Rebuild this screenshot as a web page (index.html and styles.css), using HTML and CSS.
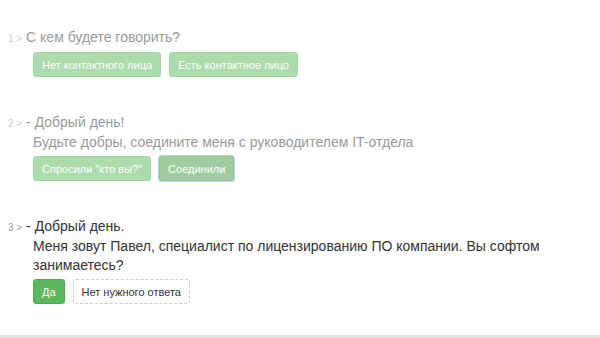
FILE: index.html
```html
<!DOCTYPE html>
<html lang="ru">

<head>
    <meta charset="UTF-8">
    <title>Сценарий звонка</title>
    <link rel="stylesheet" href="styles.css">
</head>

<body>

    <div class="script">
        <div class="step step-done">
            <div class="step-title"><span class="step-num">1 &gt;</span> С кем будете говорить?</div>
            <div class="step-actions">
                <button class="btn btn-success">Нет контактного лица</button>
                <button class="btn btn-success">Есть контактное лицо</button>
            </div>
        </div>

        <div class="step step-done">
            <div class="step-title"><span class="step-num">2 &gt;</span> - Добрый день!</div>
            <div class="step-text">Будьте добры, соедините меня с руководителем IT-отдела</div>
            <div class="step-actions">
                <button class="btn btn-success">Спросили "кто вы?"</button>
                <button class="btn btn-success active">Соединили</button>
            </div>
        </div>

        <div class="step">
            <div class="step-title"><span class="step-num">3 &gt;</span> - Добрый день.</div>
            <div class="step-text">Меня зовут Павел, специалист по лицензированию ПО компании. Вы софтом занимаетесь?</div>
            <div class="step-actions">
                <button class="btn btn-success">Да</button>
                <button class="btn btn-none">Нет нужного ответа</button>
            </div>
        </div>
    </div>

    <div class="footer"></div>

</body>

</html>
```

FILE: styles.css
```css
body {
    margin: 0;
    font-family: "Liberation Sans", Arial, sans-serif;
    color: #333;
    background: #fff;
}

.script {
    height: 335px;
    box-sizing: border-box;
    padding-top: 28px;
}

.footer {
    height: 3px;
    background: #e3e3e3;
}

.step {
    margin-bottom: 36px;
}

.step-done {
    opacity: 0.5;
}

.step-title {
    padding-left: 8px;
    font-size: 14px;
    line-height: 19px;
}

.step-num {
    font-size: 10px;
    color: #999;
}

.step-text {
    width: 540px;
    padding-left: 33px;
    font-size: 14px;
    line-height: 19px;
}

.step-actions {
    display: flex;
    gap: 8px;
    margin-top: 4px;
    padding-left: 33px;
}

.btn {
    height: 25px;
    padding: 0 8px;
    font-family: inherit;
    font-size: 11px;
    border-radius: 3px;
    cursor: pointer;
}

.btn-success {
    color: #fff;
    background: #5cb85c;
    border: 1px solid #4cae4c;
}

.btn-success.active {
    background: #449d44;
    border-color: #398439;
    box-shadow: 0 0 0 1px #66afe9;
}

.btn-none {
    color: #333;
    background: #fff;
    border: 1px dashed #ccc;
}
```
